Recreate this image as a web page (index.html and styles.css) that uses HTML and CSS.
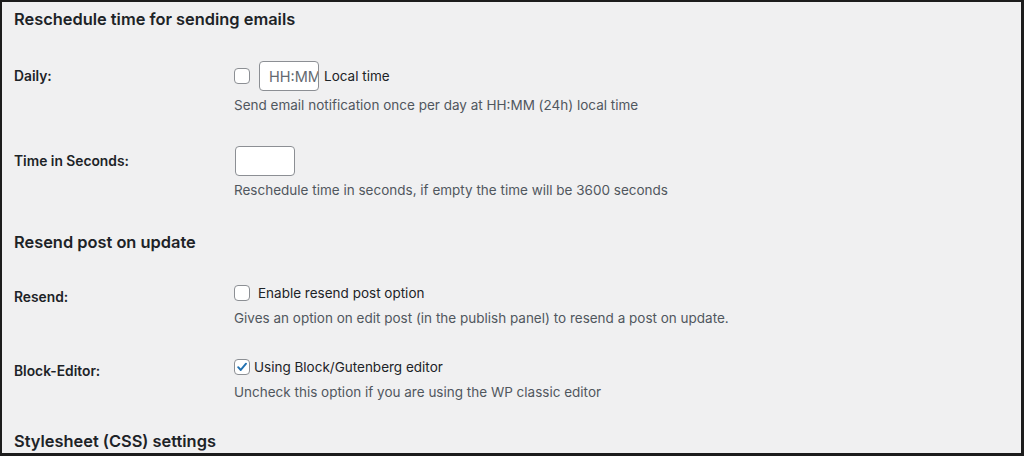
FILE: index.html
```html
<!DOCTYPE html>
<html lang="en">
<head>
    <meta charset="UTF-8">
    <title>Settings</title>
    <link rel="stylesheet" href="styles.css">
</head>
<body>
    <div class="wrap">
        <!-- Reschedule -->
        <h2 class="section-title">Reschedule time for sending emails</h2>
        <div class="form-table first">
            <div class="row">
                <div class="row-label">Daily:</div>
                <div class="row-field">
                    <div class="control control-tall">
                        <span class="checkbox"></span>
                        <input class="text-input" type="text" placeholder="HH:MM">
                        <span class="control-text">Local time</span>
                    </div>
                    <p class="description">Send email notification once per day at HH:MM (24h) local time</p>
                </div>
            </div>
            <div class="row">
                <div class="row-label">Time in Seconds:</div>
                <div class="row-field">
                    <div class="control control-tall">
                        <input class="text-input" type="text">
                    </div>
                    <p class="description">Reschedule time in seconds, if empty the time will be 3600 seconds</p>
                </div>
            </div>
        </div>

        <!-- Resend -->
        <h2 class="section-title">Resend post on update</h2>
        <div class="form-table">
            <div class="row">
                <div class="row-label">Resend:</div>
                <div class="row-field">
                    <div class="control">
                        <span class="checkbox"></span>
                        <span class="control-text wide">Enable resend post option</span>
                    </div>
                    <p class="description">Gives an option on edit post (in the publish panel) to resend a post on update.</p>
                </div>
            </div>
            <div class="row">
                <div class="row-label">Block-Editor:</div>
                <div class="row-field">
                    <div class="control">
                        <span class="checkbox checked">
                            <svg viewBox="0 0 16 16" width="16" height="16"><path d="M3.6 8.2 L6.6 11.4 L12.6 4.2" fill="none" stroke="#2271b1" stroke-width="2.2" stroke-linecap="round" stroke-linejoin="round"/></svg>
                        </span>
                        <span class="control-text tight">Using Block/Gutenberg editor</span>
                    </div>
                    <p class="description">Uncheck this option if you are using the WP classic editor</p>
                </div>
            </div>
        </div>

        <!-- Stylesheet -->
        <h2 class="section-title">Stylesheet (CSS) settings</h2>
    </div>
</body>
</html>
```

FILE: styles.css
```css
html, body {
    margin: 0;
    padding: 0;
    height: 100%;
}

body {
    background-color: #f0f0f1;
    color: #1d2327;
    font-family: Inter, "Noto Sans", sans-serif;
    font-size: 13.5px;
    overflow: hidden;
}

.wrap {
    box-sizing: border-box;
    height: 456px;
    border-style: solid;
    border-color: #1c1c1c;
    border-width: 2px 3px 3px 2px;
    padding: 5px 12px 0;
    overflow: hidden;
}

/* Section headings */
.section-title {
    margin: 0;
    font-size: 16.4px;
    line-height: 24px;
    font-weight: 600;
}

.form-table {
    margin: 28px 0 27px;
}

.form-table.first {
    margin: 30px 0 30px;
}

.row {
    display: grid;
    grid-template-columns: 220px 1fr;
}

.row + .row {
    margin-top: 28px;
}

.first .row + .row {
    margin-top: 31px;
}

.row-label {
    font-size: 13.8px;
    font-weight: 600;
    line-height: 20px;
    padding-top: 5px;
}

.control {
    display: flex;
    align-items: center;
    min-height: 22px;
}

.control-tall {
    min-height: 30px;
}

.checkbox {
    box-sizing: border-box;
    width: 16px;
    height: 16px;
    border: 1px solid #8c8f94;
    border-radius: 4px;
    background: #fff;
    flex: none;
    display: flex;
    align-items: center;
    justify-content: center;
}

.checkbox svg {
    display: block;
}

.text-input {
    box-sizing: border-box;
    width: 60px;
    height: 30px;
    margin: 0 0 0 9px;
    padding: 0 0 0 9px;
    border: 1px solid #8c8f94;
    border-radius: 4px;
    background: #fff;
    font-family: inherit;
    font-size: 14.5px;
    color: #2c3338;
}

.control-tall .text-input:first-child {
    margin-left: 1px;
}

.text-input::placeholder {
    color: #646970;
}

.control-text {
    margin-left: 5px;
}

.control-text.wide {
    margin-left: 8px;
}

.control-text.tight {
    margin-left: 4px;
}

.description {
    margin: 4px 0 0;
    line-height: 20px;
    color: #50575e;
}
```
